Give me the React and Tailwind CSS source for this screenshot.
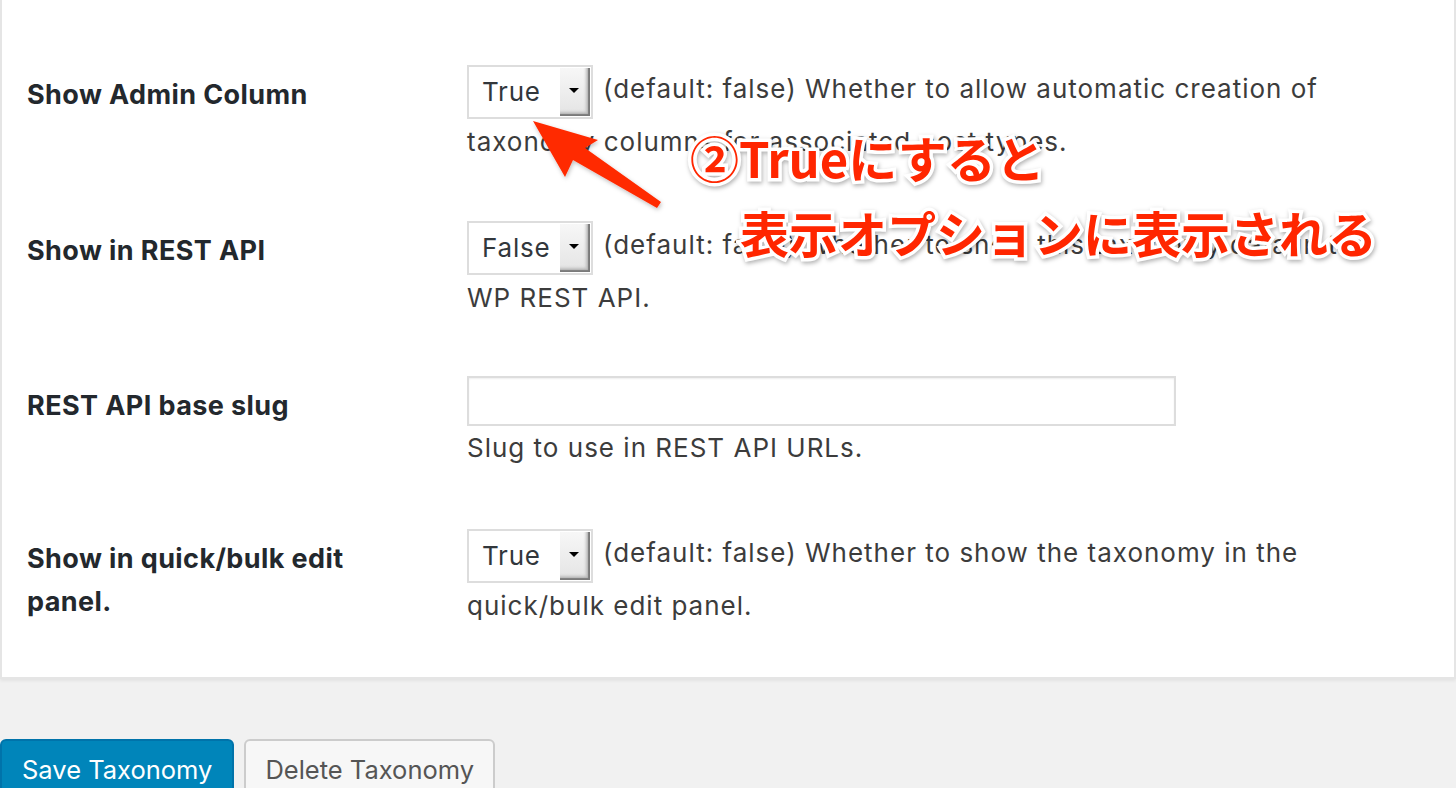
import React from 'react'

const font = { fontFamily: 'Inter, "Noto Sans", sans-serif' }

function FakeSelect({ value }) {
  return (
    <span className="inline-flex align-middle w-[126px] h-[54px] -my-[4px] border-2 border-[#dddddd] bg-white mr-[10px] relative top-[1px] tracking-[0.8px]">
      <span className="flex-1 pl-[13px] flex items-center text-[26px] text-[#32373c]">{value}</span>
      <span className="w-[30px] my-[1px] mr-[1px] bg-gradient-to-b from-[#f7f7f7] to-[#e4e4e4] flex items-center justify-center shadow-[inset_-2px_-2px_1px_#7a7a7a,inset_-4px_-4px_3px_#bcbcbc]">
        <span className="block w-0 h-0 border-l-[5px] border-r-[5px] border-t-[5px] border-l-transparent border-r-transparent border-t-black -mt-[2px] -ml-[3px]" />
      </span>
    </span>
  )
}

function Row({ label, children, height }) {
  return (
    <div className={`flex ${height}`}>
      <div className="w-[465px] pl-[25px] pt-[38px] shrink-0">
        <div className="w-[390px] text-[27px] leading-[43px] font-bold tracking-[0.4px] text-[#23282d]">{label}</div>
      </div>
      <div className="flex-1 pt-[27px] pr-[58px] text-[26px] leading-[53px] tracking-[1px] text-[#3c3c3c]">{children}</div>
    </div>
  )
}

export default function App() {
  return (
    <div className="min-h-[788px] bg-[#f1f1f1] overflow-hidden relative" style={font}>
      {/* settings panel */}
      <div className="bg-white border-x-2 border-b-2 border-[#e5e5e5] shadow-[0_2px_3px_rgba(0,0,0,0.06)] pt-[35px] h-[679px]">
        <Row label="Show Admin Column" height="h-[156px]">
          <FakeSelect value="True" />
          (default: false) Whether to allow automatic creation of taxonomy columns for associated post types.
        </Row>
        <Row label="Show in REST API" height="h-[155px]">
          <FakeSelect value="False" />
          (default: false) Whether to show this taxonomy data in the WP REST API.
        </Row>
        <Row label="REST API base slug" height="h-[153px]">
          <div className="mt-[3px] w-[709px] h-[50px] border-2 border-[#dddddd] shadow-[inset_0_1px_2px_rgba(0,0,0,0.07)] bg-white" />
          <div className="leading-[44px]">Slug to use in REST API URLs.</div>
        </Row>
        <Row label="Show in quick/bulk edit panel." height="h-[178px]">
          <FakeSelect value="True" />
          (default: false) Whether to show the taxonomy in the quick/bulk edit panel.
        </Row>
      </div>

      {/* buttons */}
      <div className="flex gap-[10px] mt-[60px]">
        <button className="h-[62px] px-[20px] bg-[#0085ba] border-2 border-[#0073aa] rounded-[6px] text-white text-[25.5px] leading-[56px] shadow-[0_2px_0_#006799]">
          Save Taxonomy
        </button>
        <button className="h-[62px] px-[19px] bg-[#f7f7f7] border-2 border-[#cccccc] rounded-[6px] text-[#555555] text-[25.5px] leading-[56px] shadow-[0_2px_0_#cccccc]">
          Delete Taxonomy
        </button>
      </div>

      {/* annotation arrow */}
      <svg className="absolute left-0 top-0 pointer-events-none" width="1456" height="788">
        <defs>
          <filter id="sh" x="-20%" y="-20%" width="140%" height="140%">
            <feDropShadow dx="1" dy="2" stdDeviation="2" floodColor="#000" floodOpacity="0.25" />
          </filter>
        </defs>
        <polygon
          points="533,121 598,140 585,148 661,202 657,208 573,160 565,177"
          fill="#ff2a00"
          filter="url(#sh)"
        />
      </svg>

      {/* annotation text */}
      <div
        className="absolute left-[690px] top-[127px] text-[49px] leading-[60px] font-bold text-[#ff2600] whitespace-nowrap [paint-order:stroke_fill] [-webkit-text-stroke:7px_white] [filter:drop-shadow(1px_2px_2px_rgba(0,0,0,0.3))]"
        style={{ fontFamily: '"Noto Sans CJK JP", sans-serif' }}
      >
        ②Trueにすると
      </div>
      <div
        className="absolute left-[740px] top-[202px] text-[49px] leading-[60px] font-bold text-[#ff2600] whitespace-nowrap [paint-order:stroke_fill] [-webkit-text-stroke:7px_white] [filter:drop-shadow(1px_2px_2px_rgba(0,0,0,0.3))]"
        style={{ fontFamily: '"Noto Sans CJK JP", sans-serif' }}
      >
        表示オプションに表示される
      </div>
    </div>
  )
}
